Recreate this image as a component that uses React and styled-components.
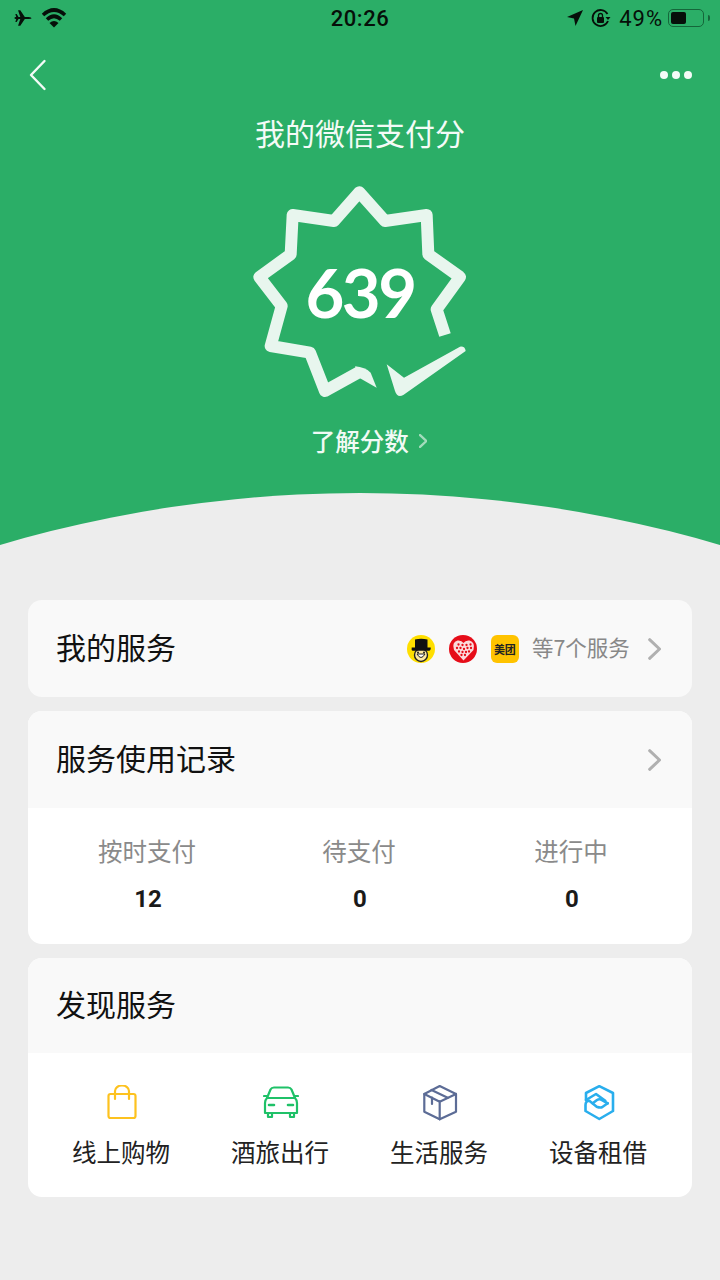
import React from 'react';
import styled, { createGlobalStyle } from 'styled-components';

const GlobalStyle = createGlobalStyle`
  html, body { margin: 0; padding: 0; }
  body {
    background: #ededed;
    font-family: "Noto Sans CJK SC", "Noto Sans", sans-serif;
  }
`;

const Page = styled.div`
  width: 720px;
  height: 1280px;
  overflow: hidden;
  background: #ededed;
`;

const Hero = styled.header`
  position: relative;
  height: 545px;
  background: #2bae67;
  overflow: hidden;
  &::after {
    content: '';
    position: absolute;
    left: -912px;
    top: 493px;
    width: 2544px;
    height: 2544px;
    border-radius: 50%;
    background: #ededed;
  }
`;

const StatusBar = styled.div`
  display: grid;
  grid-template-columns: 1fr auto 1fr;
  align-items: center;
  height: 36px;
  padding: 0 10px;
  color: #060f09;
`;

const StatusSide = styled.div`
  display: flex;
  align-items: center;
  gap: ${(p) => p.$gap || 5}px;
  padding-left: ${(p) => (p.$end ? 0 : 4)}px;
  justify-content: ${(p) => (p.$end ? 'flex-end' : 'flex-start')};
`;

const Clock = styled.span`
  font-family: "Roboto", sans-serif;
  font-size: 22px;
  font-weight: 500;
  letter-spacing: 0.5px;
`;

const Percent = styled.span`
  margin: 0 -2px 0 1px;
  font-family: "Roboto", sans-serif;
  font-size: 22px;
  letter-spacing: 1px;
`;

const Battery = styled.div`
  display: flex;
  width: 36px;
  height: 18px;
  box-sizing: border-box;
  border: 1px solid #15663a;
  border-radius: 5px;
  padding: 2px;
`;

const BatteryFill = styled.div`
  width: 15px;
  background: #060f09;
  border-radius: 2px;
`;

const BatteryCap = styled.div`
  width: 2px;
  height: 6px;
  margin-left: -3px;
  background: #15663a;
  border-radius: 0 2px 2px 0;
`;

const NavBar = styled.div`
  display: flex;
  justify-content: space-between;
  align-items: center;
  height: 44px;
  margin-top: 17px;
  padding: 0 28px 0 28px;
`;

const Dots = styled.div`
  display: flex;
  gap: 4px;
`;

const Dot = styled.i`
  width: 8px;
  height: 8px;
  border-radius: 50%;
  background: #f4fbf7;
`;

const Title = styled.h1`
  margin: 13px 0 0;
  font-size: 30px;
  line-height: 44px;
  font-weight: 400;
  color: #f4fbf7;
  text-align: center;
`;

const Badge = styled.div`
  position: relative;
  width: 240px;
  height: 240px;
  margin: 17px auto 0;
`;

const Score = styled.span`
  position: absolute;
  left: 0;
  right: 0;
  top: 79px;
  text-align: center;
  font-family: "Lato", sans-serif;
  font-size: 67px;
  line-height: 84px;
  font-weight: 700;
  letter-spacing: -2.5px;
  color: #fff;
`;

const LearnLink = styled.div`
  display: flex;
  justify-content: center;
  align-items: center;
  gap: 10px;
  margin-top: 12px;
  padding-left: 18px;
  color: #f1faf5;
  font-size: 24.5px;
  line-height: 36px;
  font-weight: 500;
`;

const Content = styled.main`
  display: flex;
  flex-direction: column;
  gap: 14px;
  padding: 55px 28px 0;
`;

const Card = styled.section`
  background: #fff;
  border-radius: 14px;
  overflow: hidden;
`;

const CardHead = styled.div`
  display: flex;
  align-items: center;
  justify-content: space-between;
  height: ${(p) => p.$h || 97}px;
  padding: 0 31px 0 28px;
  background: #f9f9f9;
`;

const CardTitle = styled.h2`
  margin: -6px 0 0;
  font-size: 30px;
  font-weight: 400;
  color: #111;
`;

const HeadRight = styled.div`
  display: flex;
  align-items: center;
`;

const Logos = styled.div`
  display: flex;
  gap: 14px;
  margin-right: 13px;
`;

const LogoRound = styled.div`
  width: 28px;
  height: 28px;
`;

const MeituanLogo = styled.div`
  display: flex;
  align-items: center;
  justify-content: center;
  width: 28px;
  height: 28px;
  border-radius: 6px;
  background: #ffc300;
  color: #222;
  font-size: 11px;
  font-weight: 700;
  white-space: nowrap;
`;

const MoreText = styled.span`
  margin: -4px 18px 0 0;
  font-size: 21.5px;
  color: #888;
`;

const Stats = styled.div`
  display: grid;
  grid-template-columns: repeat(3, 212px);
  padding: 25px 14px 0;
  height: 136px;
  box-sizing: border-box;
`;

const Stat = styled.div`
  display: flex;
  flex-direction: column;
  align-items: center;
`;

const StatLabel = styled.span`
  margin-left: -2px;
  font-size: 24.5px;
  line-height: 36px;
  color: #8a8a8a;
`;

const StatValue = styled.span`
  margin-top: 15px;
  font-family: "Roboto", sans-serif;
  font-size: 24px;
  line-height: 30px;
  font-weight: 700;
  color: #1a1a1a;
`;

const Services = styled.div`
  display: grid;
  grid-template-columns: repeat(4, 159px);
  padding: 32px 14px 0;
  height: 144px;
  box-sizing: border-box;
`;

const Service = styled.div`
  display: flex;
  flex-direction: column;
  align-items: center;
`;

const ServiceIcon = styled.svg`
  width: 36px;
  height: 36px;
  fill: none;
  stroke: ${(p) => p.$color};
  stroke-width: 2.2;
  stroke-linejoin: round;
  stroke-linecap: round;
`;

const ServiceLabel = styled.span`
  margin: 13px 0 0 -1px;
  font-size: 24.5px;
  line-height: 36px;
  color: #222;
`;

const Chevron = ({ h = 22, color = '#b0b0b0', width = 3 }) => (
  <svg width={h * 0.6} height={h} viewBox="0 0 12 20" fill="none">
    <path d="M1.5 1.5 L10.5 10 L1.5 18.5" stroke={color} strokeWidth={(width * 20) / h} strokeLinecap="round" strokeLinejoin="round" />
  </svg>
);

const services = [
  {
    name: '线上购物',
    color: '#fdc21f',
    icon: (
      <>
        <rect x="4.5" y="9" width="27" height="24" rx="2" />
        <path d="M11 14 V6 a7 5.5 0 0 1 14 0 V14" />
      </>
    ),
  },
  {
    name: '酒旅出行',
    color: '#1fc168',
    icon: (
      <>
        <path d="M4 11 H1 M32 11 H35" />
        <path d="M2 28 V18 Q2 15 4 13 L7.5 4.5 Q8.5 2.5 11 2.5 H25 Q27.5 2.5 28.5 4.5 L32 13 Q34 15 34 18 V28 Z" />
        <path d="M4 13 H32" />
        <path d="M5 28 V32 H9 V28 M27 28 V32 H31 V28" />
        <path d="M6 20 H11 M25 20 H30" strokeWidth="2.6" />
      </>
    ),
  },
  {
    name: '生活服务',
    color: '#5c6c96',
    icon: (
      <>
        <path d="M17.7 1 L34 9 V26.7 L17.7 34.3 L2.3 26.7 V9 Z" />
        <path d="M2.3 9 L17.7 16.7 L34 9 M17.7 16.7 V34.3" />
        <path d="M9.5 5 L25.7 12.8 M10 12.5 V19" />
      </>
    ),
  },
  {
    name: '设备租借',
    color: '#29aeed',
    icon: (
      <g strokeWidth="2.6">
        <path d="M5 15 V8 L18.3 1.2 L32 8 V26 L18.3 34 L4.5 26 V20 Q4.5 15.7 8.3 15.7 L15.7 21.7 Q19 23 21 22.3 L26.7 18.3" />
        <path d="M5 15 L15 9 L24.3 15.7" />
        <path d="M11.7 18.3 L16 15 Q18.3 13.5 21 15 L26.7 18.3" />
      </g>
    ),
  },
];

const heartDots = [
  [9, 9.5], [13, 10], [17, 10], [21, 9.5], [7.5, 13], [11, 13], [14.5, 14],
  [18, 13], [21.5, 13], [9.5, 16.5], [13, 17], [16.5, 17], [19.5, 16.5], [12, 20], [15.5, 20],
];

const App = () => (
  <Page>
    <GlobalStyle />
    <Hero>
      <StatusBar>
        <StatusSide $gap={9}>
          <svg width="18" height="18" viewBox="0 0 20 20" fill="#060f09">
            <path d="M0.5 10 Q0.5 9 2 9 L7 9 L4.5 1.5 L7 1.5 L12 9 L16.5 9 Q19.5 9.3 19.5 10.2 Q19.5 11 16.5 11.2 L12 11.2 L7 18.5 L4.5 18.5 L7 11.2 L2 11.2 Q0.5 11 0.5 10 Z" />
            <path d="M1.5 5.5 H3 L5 9 H2.5 Z M1.5 14.5 H3 L5 11 H2.5 Z" />
          </svg>
          <svg width="26" height="20" viewBox="0 0 26 20" fill="none" stroke="#060f09" strokeWidth="3.6">
            <path d="M2 7 Q13 -3 24 7" />
            <path d="M6 11.5 Q13 5 20 11.5" />
            <path d="M13 19.5 L8.5 15 Q13 11 17.5 15 Z" fill="#060f09" stroke="none" />
          </svg>
        </StatusSide>
        <Clock>20:26</Clock>
        <StatusSide $end $gap={7}>
          <svg width="18" height="18" viewBox="0 0 18 18" fill="#060f09">
            <path d="M17 1 L9.5 17 L8 9.5 L1 8 Z" />
          </svg>
          <svg width="20" height="20" viewBox="0 0 20 20" fill="none" stroke="#060f09">
            <path d="M16.5 6 A8 8 0 1 0 17 13" strokeWidth="1.8" />
            <path d="M14.5 9 H19.5 L17 12 Z" fill="#060f09" stroke="none" />
            <rect x="6" y="9" width="7" height="6" rx="1" fill="#060f09" stroke="none" />
            <path d="M7.5 9 V7.5 a2 2 0 0 1 4 0 V9" strokeWidth="1.3" />
          </svg>
          <Percent>49%</Percent>
          <Battery>
            <BatteryFill />
          </Battery>
          <BatteryCap />
        </StatusSide>
      </StatusBar>
      <NavBar>
        <svg width="20" height="32" viewBox="0 0 20 32" fill="none">
          <path d="M16.5 2 L3 16 L16.5 30" stroke="#f4fbf7" strokeWidth="2.4" strokeLinecap="round" strokeLinejoin="round" />
        </svg>
        <Dots>
          <Dot />
          <Dot />
          <Dot />
        </Dots>
      </NavBar>
      <Title>我的微信支付分</Title>
      <Badge>
        <svg width="240" height="240" viewBox="0 0 720 720" fill="none">
          <path
            d="M615 492 L590 415 L660 318 L565 250 L560 132 L435 150 L358 64 L282 150 L158 132 L152 250 L58 318 L125 405 L92 525 L210 545 L255 660 L358 603"
            stroke="#e8f6ee"
            strokeWidth="36"
            strokeLinejoin="round"
          />
          <path d="M345 586 Q375 588 392 605 L410 650 L360 622 Z" fill="#e8f6ee" />
          <path
            d="M440 580 L492 620 L660 527 Q675 525 677 540 L490 672 Q472 682 465 660 Z"
            fill="#e8f6ee"
          />
        </svg>
        <Score>639</Score>
      </Badge>
      <LearnLink>
        了解分数
        <Chevron h={14} color="#a3dcbc" width={2.4} />
      </LearnLink>
    </Hero>
    <Content>
      <Card>
        <CardHead>
          <CardTitle>我的服务</CardTitle>
          <HeadRight>
            <Logos>
              <LogoRound>
                <svg width="28" height="28" viewBox="0 0 28 28">
                  <circle cx="14" cy="14" r="14" fill="#ffdf00" />
                  <circle cx="14" cy="20" r="6.5" fill="#ffe9a0" stroke="#222" strokeWidth="1.4" />
                  <path d="M8 4.5 Q14 3 20.5 4.5 L20.5 12.5 H23.7 Q24 15.5 22 15.7 H5.5 Q4.2 15 4.7 12.5 H8 Z" fill="#111" />
                  <path d="M10 19 Q14 26 18 19 Z" fill="#fff" stroke="#222" strokeWidth="1" />
                  <circle cx="11" cy="17.5" r="1" fill="#222" />
                  <circle cx="17" cy="17.5" r="1" fill="#222" />
                </svg>
              </LogoRound>
              <LogoRound>
                <svg width="28" height="28" viewBox="0 0 28 28">
                  <circle cx="14" cy="14" r="14" fill="#e60d19" />
                  <path d="M14.5 25.5 L5 15 Q2.5 7 8.5 5.5 Q12.5 5 14.5 8 Q16.5 5 20.5 5.5 Q26.5 7 24.5 15 Z" fill="#fbdadb" />
                  <g fill="#e60d19">
                    {heartDots.map(([x, y]) => (
                      <circle key={`${x}-${y}`} cx={x + 0.5} cy={y} r="1.15" />
                    ))}
                  </g>
                </svg>
              </LogoRound>
              <MeituanLogo>美团</MeituanLogo>
            </Logos>
            <MoreText>等7个服务</MoreText>
            <Chevron />
          </HeadRight>
        </CardHead>
      </Card>
      <Card>
        <CardHead>
          <CardTitle>服务使用记录</CardTitle>
          <Chevron />
        </CardHead>
        <Stats>
          <Stat>
            <StatLabel>按时支付</StatLabel>
            <StatValue>12</StatValue>
          </Stat>
          <Stat>
            <StatLabel>待支付</StatLabel>
            <StatValue>0</StatValue>
          </Stat>
          <Stat>
            <StatLabel>进行中</StatLabel>
            <StatValue>0</StatValue>
          </Stat>
        </Stats>
      </Card>
      <Card>
        <CardHead $h={95}>
          <CardTitle>发现服务</CardTitle>
        </CardHead>
        <Services>
          {services.map((s) => (
            <Service key={s.name}>
              <ServiceIcon viewBox="0 0 36 36" $color={s.color}>
                {s.icon}
              </ServiceIcon>
              <ServiceLabel>{s.name}</ServiceLabel>
            </Service>
          ))}
        </Services>
      </Card>
    </Content>
  </Page>
);

export default App;
